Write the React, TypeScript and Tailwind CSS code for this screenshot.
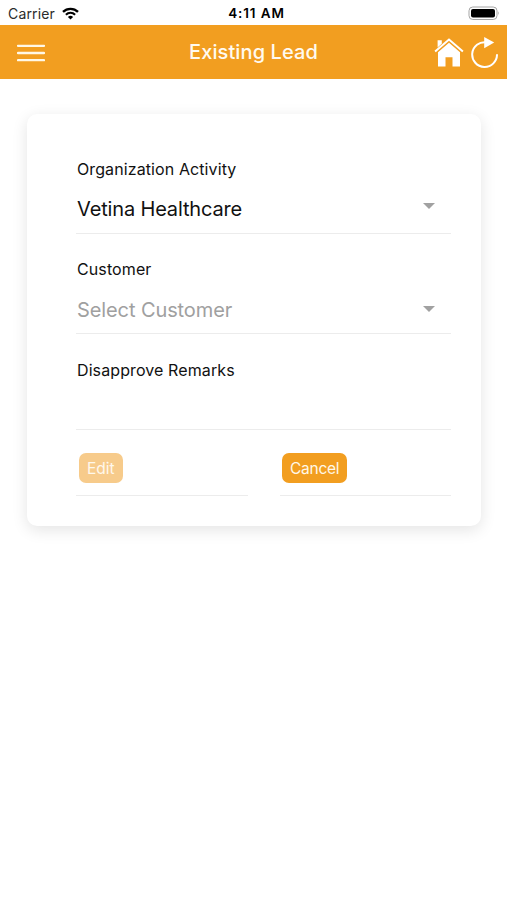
import type { ReactNode } from "react";
import clsx from "clsx";

function StatusBar() {
    return (
        <div className="grid h-[25px] grid-cols-3 items-center pl-2 pr-[7px] text-[#2b2b2b]">
            <div className="flex items-center gap-[7px]">
                <span className="pt-[2px] text-[14px] leading-[23px] tracking-[0.15px]">Carrier</span>
                <svg width="17" height="13" viewBox="0 0 17 13" fill="none" stroke="#000" className="mt-px shrink-0">
                    <path d="M1 4.9a10.6 10.6 0 0 1 15 0" strokeWidth="2.3" />
                    <path d="M3.9 7.7a6.5 6.5 0 0 1 9.2 0" strokeWidth="2.1" />
                    <path d="M8.5 12.6 5.9 10a3.7 3.7 0 0 1 5.2 0z" fill="#000" stroke="none" />
                </svg>
            </div>
            <span className="pl-[5px] pt-[2px] text-center text-[13.5px] font-semibold leading-[23px] tracking-[0.9px] text-black">
                4:11 AM
            </span>
            <svg width="33" height="15" viewBox="0 0 33 15" className="ml-auto mt-px">
                <rect x="2" y="1" width="28" height="12.5" rx="3.8" fill="#fff" stroke="#a5a5a5" />
                <rect x="4" y="3" width="24" height="8.5" rx="2" fill="#000" />
                <path d="M31.2 5.2q1.6 2 0 4z" fill="#999" />
            </svg>
        </div>
    );
}

function Header() {
    return (
        <header className="grid h-[54px] grid-cols-3 items-center bg-[#f29e20] pl-[17px] pr-[9px]">
            {/* Menu */}
            <button aria-label="Menu">
                <svg width="28" height="18" viewBox="0 0 28 18" stroke="#fff8e6" strokeWidth="2.3" strokeLinecap="round" className="mt-px">
                    <path d="M1 1.8h26M1 9h26M1 16.2h26" />
                </svg>
            </button>
            <h1 className="mr-2 whitespace-nowrap text-center text-[20px] font-medium tracking-[0.1px] text-[#fffaf0]">
                Existing Lead
            </h1>
            {/* Actions */}
            <div className="flex items-center justify-end gap-[7px]">
                <svg width="30" height="31" viewBox="0 0 30 31" fill="#fff">
                    <path d="M3.6 3.3h4.2v3.5L3.6 10.6z" />
                    <path d="M1.1 14.4 15 2.5l13.9 11.9" fill="none" stroke="#fff" strokeWidth="2" />
                    <path d="M15 5.7 26 15.2v14.3h-7.5v-9.3h-7v9.3H4V15.2z" />
                </svg>
                <svg width="27" height="33" viewBox="0 0 27 33" fill="none">
                    <path d="M15.5 6.3A12.4 12.4 0 1 0 26 18.2" stroke="#fff" strokeWidth="2" />
                    <path d="M13.2 1 23.2 6.4 13.2 12.2z" fill="#fff" />
                </svg>
            </div>
        </header>
    );
}

function Caret({ className }: { className?: string }) {
    return (
        <svg width="12" height="6" viewBox="0 0 12 6" fill="#a1a1a1" className={className}>
            <path d="M0 0h12L6 6z" />
        </svg>
    );
}

function Field({ label, className, children }: { label: string; className?: string; children?: ReactNode }) {
    return (
        <div className={clsx("border-b border-[#ececec] pl-px", className)}>
            <p className="text-[16px] leading-6 tracking-[0.1px] text-[#111]">{label}</p>
            {children}
        </div>
    );
}

function Action({ label, disabled }: { label: string; disabled?: boolean }) {
    return (
        <div className={clsx("h-[66px] border-b border-[#ececec] pt-[23px]", disabled ? "pl-[3px]" : "pl-[2px]")}>
            <button
                disabled={disabled}
                className={clsx(
                    "block h-[30px] rounded-[7px] px-[8px] pt-px text-[15.5px]",
                    disabled ? "bg-[#f7cb8b] text-[#fff8ec]" : "bg-[#f29e20] tracking-[-0.25px] text-[#fff8e8]"
                )}
            >
                {label}
            </button>
        </div>
    );
}

export default function App() {
    return (
        <div className="min-h-screen bg-white font-['Inter','Liberation_Sans',sans-serif]">
            <StatusBar />
            <Header />

            <main className="ml-[27px] mr-[26px] mt-[35px] h-[412px] rounded-[10px] bg-white pl-[49px] pr-[30px] pt-[19px] shadow-[0_4px_16px_rgba(0,0,0,0.11)]">
                <Field label="Organization Activity" className="h-[101px] pt-[24px]">
                    <div className="mt-[13px] flex justify-between pr-[16px]">
                        <span className="text-[20px] leading-[30px] tracking-[-0.15px] text-[#111]">Vetina Healthcare</span>
                        <Caret className="mt-[9px]" />
                    </div>
                </Field>
                <Field label="Customer" className="h-[100px] pt-[23px]">
                    <div className="mt-[14px] flex justify-between pr-[16px]">
                        <span className="text-[20px] leading-[30px] tracking-[-0.1px] text-[#a0a0a0]">Select Customer</span>
                        <Caret className="mt-[11px]" />
                    </div>
                </Field>
                <Field label="Disapprove Remarks" className="h-[96px] pt-[24px]" />
                <div className="grid grid-cols-[172px_171px] justify-between">
                    <Action label="Edit" disabled />
                    <Action label="Cancel" />
                </div>
            </main>
        </div>
    );
}
